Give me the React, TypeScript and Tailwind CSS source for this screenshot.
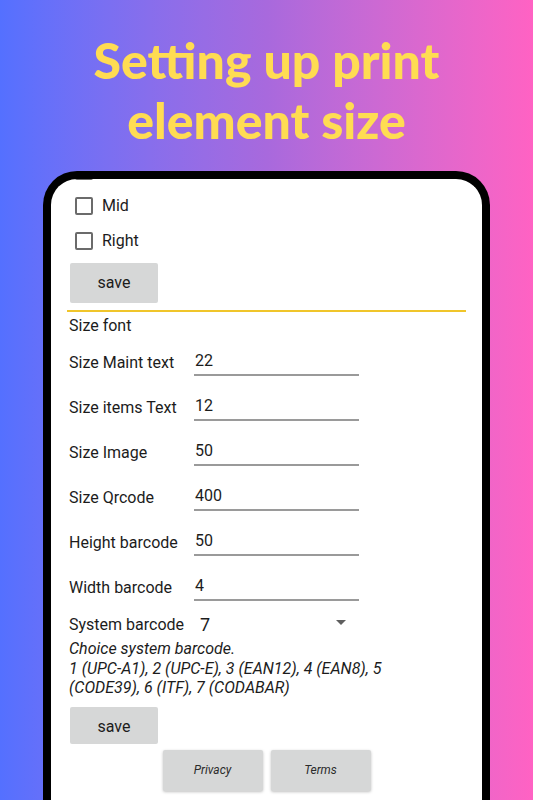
const rows = [
  { label: 'Size Maint text', value: '22' },
  { label: 'Size items Text', value: '12' },
  { label: 'Size Image', value: '50' },
  { label: 'Size Qrcode', value: '400' },
  { label: 'Height barcode', value: '50' },
  { label: 'Width barcode', value: '4' },
]

function Checkbox({ label }: { label: string }) {
  return (
    <div className="flex h-[35px] items-center pl-[24px]">
      <span className="h-[18px] w-[18px] rounded-[2px] border-2 border-[#6b6b6b]" />
      <span className="ml-[9px] text-[16px] text-[#1c1c1c]">{label}</span>
    </div>
  )
}

function SaveButton({ className = '' }: { className?: string }) {
  return (
    <div
      className={`ml-[19px] flex w-[88px] items-center justify-center rounded-[2px] bg-[#d6d7d7] text-[16px] text-[#1c1c1c] ${className}`}
    >
      save
    </div>
  )
}

export default function App() {
  return (
    <div className="h-[800px] w-[533px] overflow-hidden bg-gradient-to-r from-[#5470ff] via-[#a869dd] to-[#ff62c3]">
      <h1 className="h-[171px] pt-[30px] text-center font-['Lato',sans-serif] text-[50px] font-black leading-[60px] text-[#ffdc52]">
        Setting up print
        <br />
        element size
      </h1>

      <div className="mx-[43px] h-[700px] rounded-t-[34px] border-x-[8px] border-t-[8px] border-black bg-white">
        <div className="h-full overflow-hidden rounded-t-[26px] font-['Roboto',sans-serif]">
          <div className="-mt-[26px]">
            <Checkbox label="Left" />
            <Checkbox label="Mid" />
            <Checkbox label="Right" />
          </div>

          <SaveButton className="mt-[5px] h-[40px]" />

          <div className="mx-[16px] mt-[7px] h-[2px] bg-[#f0c52a]" />

          <div className="flex h-[28px] items-center pl-[18px] text-[16px] text-[#1c1c1c]">Size font</div>

          {rows.map((r) => (
            <div key={r.label} className="flex h-[45px] items-center pl-[18px] text-[16px] text-[#1c1c1c]">
              <span className="w-[125px]">{r.label}</span>
              <div className="h-[26px] w-[165px] border-b-2 border-[#9a9a9a] pl-[1px] leading-[22px]">{r.value}</div>
            </div>
          ))}

          <div className="flex h-[29px] items-center pl-[18px] text-[#1c1c1c]">
            <span className="w-[131px] text-[16px]">System barcode</span>
            <span className="text-[18px]">7</span>
            <svg className="ml-[126px] mt-[-4px]" width="10" height="5" viewBox="0 0 10 5">
              <path d="M0 0h10L5 5z" fill="#5f5f5f" />
            </svg>
          </div>

          <p className="pl-[18px] pr-[60px] text-[16px] italic leading-[19.5px] text-[#1c1c1c]">
            Choice system barcode.
            <br />
            1 (UPC-A1), 2 (UPC-E), 3 (EAN12), 4 (EAN8), 5 (CODE39), 6 (ITF), 7 (CODABAR)
          </p>

          <SaveButton className="mt-[9px] h-[37px] pt-[3px]" />

          <div className="mt-[6px] flex justify-center gap-[8px]">
            <div className="flex h-[41px] w-[100px] items-center justify-center rounded-[2px] bg-[#d6d7d7] text-[12px] italic text-[#2b2b2b] shadow-[0_1px_3px_rgba(0,0,0,0.25)]">
              Privacy
            </div>
            <div className="flex h-[41px] w-[100px] items-center justify-center rounded-[2px] bg-[#d6d7d7] text-[12px] italic text-[#2b2b2b] shadow-[0_1px_3px_rgba(0,0,0,0.25)]">
              Terms
            </div>
          </div>
        </div>
      </div>
    </div>
  )
}
